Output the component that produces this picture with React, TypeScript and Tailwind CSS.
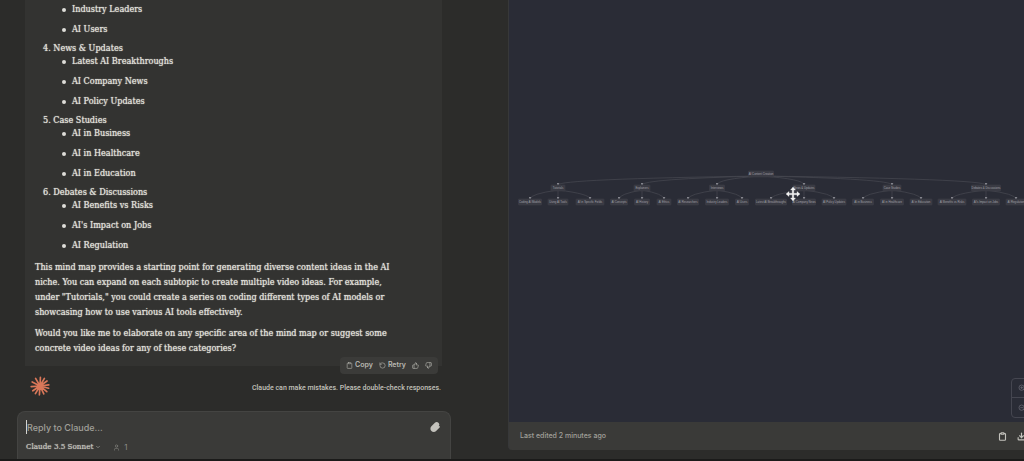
import React from "react";
import { ChevronDown, Clipboard, Download, Paperclip, RotateCcw, ThumbsDown, ThumbsUp, User, ZoomIn, ZoomOut } from "lucide-react";

interface Topic {
  title: string;
  items: string[];
}

interface MapNode {
  label: string;
  x: number;
  width: number;
  children: { label: string; x: number; width: number }[];
}

const topics: Topic[] = [
  { title: "News & Updates", items: ["Latest AI Breakthroughs", "AI Company News", "AI Policy Updates"] },
  { title: "Case Studies", items: ["AI in Business", "AI in Healthcare", "AI in Education"] },
  { title: "Debates & Discussions", items: ["AI Benefits vs Risks", "AI's Impact on Jobs", "AI Regulation"] },
];

const branches: MapNode[] = [
  {
    label: "Tutorials", x: 50, width: 14,
    children: [
      { label: "Coding AI Models", x: 22, width: 23 },
      { label: "Using AI Tools", x: 50, width: 20 },
      { label: "AI in Specific Fields", x: 82, width: 28 },
    ],
  },
  {
    label: "Explainers", x: 134, width: 16,
    children: [
      { label: "AI Concepts", x: 111, width: 17 },
      { label: "AI History", x: 134, width: 15 },
      { label: "AI Ethics", x: 156, width: 14 },
    ],
  },
  {
    label: "Interviews", x: 209, width: 15,
    children: [
      { label: "AI Researchers", x: 180, width: 21 },
      { label: "Industry Leaders", x: 209, width: 23 },
      { label: "AI Users", x: 234, width: 13 },
    ],
  },
  {
    label: "News & Updates", x: 296, width: 22,
    children: [
      { label: "Latest AI Breakthroughs", x: 263, width: 31 },
      { label: "AI Company News", x: 296, width: 23 },
      { label: "AI Policy Updates", x: 326, width: 24 },
    ],
  },
  {
    label: "Case Studies", x: 384, width: 18,
    children: [
      { label: "AI in Business", x: 355, width: 21 },
      { label: "AI in Healthcare", x: 384, width: 23 },
      { label: "AI in Education", x: 413, width: 22 },
    ],
  },
  {
    label: "Debates & Discussions", x: 478, width: 29,
    children: [
      { label: "AI Benefits vs Risks", x: 444, width: 28 },
      { label: "AI's Impact on Jobs", x: 478, width: 27 },
      { label: "AI Regulation", x: 508, width: 20 },
    ],
  },
];

const Node: React.FC<{ label: string; x: number; y: number; width: number }> = ({ label, x, y, width }) => (
  <g>
    <rect x={x - width / 2} y={y - 3} width={width} height={6} rx={0.5} fill="#393a43" stroke="#40414a" strokeWidth={0.5} />
    <text x={x} y={y + 1} textAnchor="middle" fontSize={2.8} fill="#a3a3aa">
      {label}
    </text>
  </g>
);

const MindMap: React.FC = () => (
  <svg width="540" height="48" viewBox="1 0 540 48" className="shrink-0 font-['Liberation_Sans',sans-serif]">
    <defs>
      <marker id="arrow" viewBox="0 0 4 4" refX="3" refY="2" markerWidth="3" markerHeight="3" markerUnits="userSpaceOnUse" orient="auto">
        <path d="M0 0L4 2L0 4z" fill="#85868e" />
      </marker>
    </defs>
    <g fill="none" stroke="#484952" strokeWidth={0.7}>
      {branches.map((b) => (
        <g key={b.label}>
          <path d={`M253 12Q${b.x} 15 ${b.x} 21`} markerEnd="url(#arrow)" />
          {b.children.map((c) => (
            <path key={c.label} d={`M${b.x} 26Q${c.x} 30 ${c.x} 35`} markerEnd="url(#arrow)" />
          ))}
        </g>
      ))}
    </g>
    <Node label="AI Content Creation" x={253} y={10} width={25} />
    {branches.map((b) => (
      <g key={b.label}>
        <Node label={b.label} x={b.x} y={24} width={b.width} />
        {b.children.map((c) => (
          <Node key={c.label} label={c.label} x={c.x} y={38} width={c.width} />
        ))}
      </g>
    ))}
  </svg>
);

const ClaudeMark: React.FC = () => (
  <svg width="20" height="20" viewBox="-10 -10 20 20" stroke="#d97759" strokeWidth="1.7" strokeLinecap="round">
    <path d="M0 0L0.4-8.6M0 0L4.4-7.6M0 0L7-5M0 0L8.8-1.2M0 0L8.6 2.2M0 0L6.8 5.6M0 0L3.8 7.8M0 0L-0.6 8.8M0 0L-4.6 7.6M0 0L-7.2 4.8M0 0L-8.8 0.6M0 0L-7.8-4M0 0L-4.4-7.6" />
  </svg>
);

const BulletList: React.FC<{ items: string[] }> = ({ items }) => (
  <ul className="space-y-[7px]">
    {items.map((item) => (
      <li key={item} className="flex items-center gap-1.5">
        <span className="h-1 w-1 rounded-full bg-[#deddd8]" />
        {item}
      </li>
    ))}
  </ul>
);

const Conversation: React.FC = () => (
  <section className="flex min-w-0 flex-col">
    {/* Assistant message */}
    <article className="relative mr-[66px] ml-[25px] bg-[#333331] px-2.5 pt-[3px] pb-2.5 font-['DejaVu_Serif_Condensed','DejaVu_Serif',serif] text-[9px] text-[#e2e1dc]">
      <div className="space-y-1.5 leading-[13px] [text-shadow:0_0_1px_currentColor]">
        <div className="pl-[27px]">
          <BulletList items={["Industry Leaders", "AI Users"]} />
        </div>
        {topics.map((topic, i) => (
          <div key={topic.title} className="pl-2">
            <h3>{i + 4}. {topic.title}</h3>
            <div className="pl-[19px]">
              <BulletList items={topic.items} />
            </div>
          </div>
        ))}
      </div>
      <div className="mt-2 space-y-1.5 leading-[15px] [text-shadow:0_0_1px_currentColor]">
        <p>
          This mind map provides a starting point for generating diverse content ideas in the AI
          <br />
          niche. You can expand on each subtopic to create multiple video ideas. For example,
          <br />
          under "Tutorials," you could create a series on coding different types of AI models or
          <br />
          showcasing how to use various AI tools effectively.
        </p>
        <p>
          Would you like me to elaborate on any specific area of the mind map or suggest some
          <br />
          concrete video ideas for any of these categories?
        </p>
      </div>

      {/* Message actions */}
      <div className="absolute right-1 -bottom-2 flex h-[17px] items-center gap-1.5 rounded bg-[#3b3b39] px-1.5 font-['Inter',sans-serif] text-[7px] font-semibold text-[#b9b8b2]">
        <button className="flex items-center gap-0.5">
          <Clipboard className="h-[7px] w-[7px]" />
          Copy
        </button>
        <button className="flex items-center gap-0.5">
          <RotateCcw className="h-[7px] w-[7px]" />
          Retry
        </button>
        <button aria-label="Good response"><ThumbsUp className="h-[7px] w-[7px]" /></button>
        <button aria-label="Bad response"><ThumbsDown className="h-[7px] w-[7px]" /></button>
      </div>
    </article>

    <div className="mr-[67px] ml-[30px] flex items-center justify-between py-2.5">
      <ClaudeMark />
      <p className="pt-1 font-['Roboto',sans-serif] text-[7px] font-medium text-[#c3c2bc]">
        Claude can make mistakes. Please double-check responses.
      </p>
    </div>

    {/* Composer */}
    <form className="mt-auto mr-[57px] ml-[17px] rounded-t-lg border border-b-0 border-[#444442] bg-[#3a3a38] px-2 pt-2 pb-[5px]">
      <div className="flex items-center justify-between">
        <input
          aria-label="Reply to Claude"
          placeholder="Reply to Claude..."
          className="h-3.5 min-w-0 flex-1 border-l border-[#d4d3cf] bg-transparent font-['Inter',sans-serif] text-[9px] font-medium outline-none placeholder:text-[#a1a09a]"
        />
        <button type="button" aria-label="Attach file" className="pr-0.5 text-[#c3c2bc]">
          <Paperclip className="h-2.5 w-2.5" strokeWidth={4} />
        </button>
      </div>
      <div className="mt-1.5 flex items-center gap-3 text-[#8c8b86]">
        <button type="button" className="flex items-center gap-0.5 font-['DejaVu_Serif_Condensed','DejaVu_Serif',serif] text-[8px] leading-[14px] text-[#c3c2bc] [text-shadow:0_0_1px_currentColor]">
          Claude 3.5 Sonnet
          <ChevronDown className="h-1.5 w-1.5" />
        </button>
        <span className="flex items-center gap-1 font-['Inter',sans-serif] text-[8px]">
          <User className="h-[7px] w-[7px]" />
          1
        </span>
      </div>
    </form>
  </section>
);

const Artifact: React.FC = () => (
  <section className="mb-[9px] flex min-w-0 flex-col overflow-hidden rounded-bl border-l border-[#373839] bg-[#3a3a38]">
    <div className="relative flex flex-1 items-start overflow-hidden bg-[#2a2c36] pt-[164px]">
      <MindMap />
      {/* Move cursor */}
      <svg width="14" height="14" viewBox="0 0 14 14" className="absolute top-[187px] left-[277px]">
        <path
          d="M7 0L9.5 3H7.8V6.2H11V4.5L14 7L11 9.5V7.8H7.8V11H9.5L7 14L4.5 11H6.2V7.8H3V9.5L0 7L3 4.5V6.2H6.2V3H4.5z"
          fill="#f2f2f2"
          stroke="#f2f2f2"
          strokeWidth="0.3"
        />
      </svg>
      <div className="absolute -right-1 bottom-1 flex w-[17px] flex-col divide-y divide-[#454650] rounded border border-[#454650] text-[#6f707a]">
        <button aria-label="Zoom in" className="flex h-[19px] items-center pl-1.5"><ZoomIn className="h-2 w-2 shrink-0" /></button>
        <button aria-label="Zoom out" className="flex h-[19px] items-center pl-1.5"><ZoomOut className="h-2 w-2 shrink-0" /></button>
      </div>
    </div>
    <footer className="flex h-7 items-center justify-between pl-[11px] font-['Inter',sans-serif] text-[7px] font-medium text-[#a1a09a]">
      <span>Last edited 2 minutes ago</span>
      <div className="-mr-0.5 flex gap-2.5 text-[#c3c2bc]">
        <button aria-label="Copy artifact"><Clipboard className="h-[9px] w-[9px]" strokeWidth={3} /></button>
        <button aria-label="Download artifact"><Download className="h-[9px] w-[9px]" strokeWidth={3} /></button>
      </div>
    </footer>
  </section>
);

export default function App() {
  return (
    <main className="grid min-h-screen grid-cols-[127fr_129fr] overflow-hidden border-b-2 border-[#1b1b1a] bg-[#2c2c2a]">
      <Conversation />
      <Artifact />
    </main>
  );
}
